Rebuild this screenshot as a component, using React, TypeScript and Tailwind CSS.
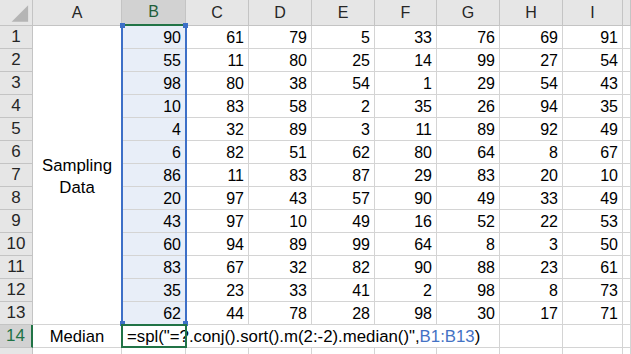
import React from "react";

const cols = ["A", "B", "C", "D", "E", "F", "G", "H", "I"];

const data: number[][] = [
  [90, 61, 79, 5, 33, 76, 69, 91],
  [55, 11, 80, 25, 14, 99, 27, 54],
  [98, 80, 38, 54, 1, 29, 54, 43],
  [10, 83, 58, 2, 35, 26, 94, 35],
  [4, 32, 89, 3, 11, 89, 92, 49],
  [6, 82, 51, 62, 80, 64, 8, 67],
  [86, 11, 83, 87, 29, 83, 20, 10],
  [20, 97, 43, 57, 90, 49, 33, 49],
  [43, 97, 10, 49, 16, 52, 22, 53],
  [60, 94, 89, 99, 64, 8, 3, 50],
  [83, 67, 32, 82, 90, 88, 23, 61],
  [35, 23, 33, 41, 2, 98, 8, 73],
  [62, 44, 78, 28, 98, 30, 17, 71],
];

const cell = "border-r border-b border-[#d4d4d4]";
const head = "border-r border-b border-[#c4c4c4] bg-[#e6e6e6] flex items-center justify-center text-[#262626]";
const num = "flex items-end justify-end pr-[4px] pb-[1px] text-[16px] leading-[19px] text-black";

function RowHead({ n, active }: { n?: number; active?: boolean }) {
  return (
    <div
      className={
        active
          ? "border-b border-[#c4c4c4] border-r-2 border-r-[#217346] bg-[#d2d2d2] flex items-center justify-center text-[17px] text-[#217346]"
          : head + " text-[17px]"
      }
    >
      {n}
    </div>
  );
}

export default function App() {
  return (
    <div
      className="relative w-[631px] h-[354px] overflow-hidden bg-white"
      style={{ fontFamily: '"Liberation Sans", Arial, sans-serif' }}
    >
      <div className="grid grid-cols-[33px_89px_64px_63px_63px_63px_62px_63px_63px_60px_1fr] grid-rows-[26px_repeat(15,23px)]">
        {/* header row */}
        <div className={head}>
          <svg width="33" height="26" viewBox="0 0 33 26">
            <polygon points="29,5 29,22 12,22" fill="#b5b5b5" />
          </svg>
        </div>
        {cols.map((c) =>
          c === "B" ? (
            <div
              key={c}
              className="border-r border-[#c4c4c4] border-b-2 border-b-[#217346] bg-[#d2d2d2] flex items-center justify-center text-[16px] text-[#1f5e3a]"
            >
              {c}
            </div>
          ) : (
            <div key={c} className={head + " text-[16px]"}>
              {c}
            </div>
          )
        )}
        <div className={head}></div>

        {/* data rows 1-13 */}
        {data.map((row, i) => (
          <React.Fragment key={i}>
            <RowHead n={i + 1} />
            {i === 0 && (
              <div className={cell + " row-span-13 flex flex-col items-center justify-center text-[16.8px] leading-[22px] text-black pt-[3px]"}>
                <span>Sampling</span>
                <span>Data</span>
              </div>
            )}
            {row.map((v, j) => (
              <div key={j} className={cell + " " + num + (j === 0 ? " bg-[#e8eef8]" : "")}>
                {v}
              </div>
            ))}
            <div className={cell}></div>
          </React.Fragment>
        ))}

        {/* row 14 */}
        <RowHead n={14} active />
        <div className={cell + " flex items-end justify-center pb-[1px] text-[16.6px] leading-[19px] text-black"}>Median</div>
        <div className={cell + " col-span-6 flex items-end pl-[5px] pb-[1px] text-[16.8px] leading-[19px] text-black whitespace-nowrap"}>
          <span>
            =spl("=?.conj().sort().m(2:-2).median()",<span className="text-[#4472c4]">B1:B13</span>)
          </span>
        </div>
        <div className={cell}></div>
        <div className={cell}></div>
        <div className={cell}></div>

        {/* row 15 (partial, clipped) */}
        <RowHead />
        {cols.map((c) => (
          <div key={c} className={cell}></div>
        ))}
        <div className={cell}></div>
      </div>

      {/* selection B1:B13 */}
      <div className="absolute left-[121px] top-[26px] w-[66px] h-[298px] border-x-2 border-[#3d6fc7] pointer-events-none"></div>
      <div className="absolute left-[120px] top-[23px] w-[5px] h-[5px] bg-[#3d6fc7]"></div>
      <div className="absolute left-[183px] top-[23px] w-[5px] h-[5px] bg-[#3d6fc7]"></div>
      <div className="absolute left-[120px] top-[321px] w-[5px] h-[5px] bg-[#3d6fc7]"></div>
      <div className="absolute left-[183px] top-[321px] w-[5px] h-[5px] bg-[#3d6fc7]"></div>

      {/* active cell B14 */}
      <div className="absolute left-[121px] top-[324px] w-[66px] h-[24px] border-2 border-[#217346] pointer-events-none"></div>
    </div>
  );
}
